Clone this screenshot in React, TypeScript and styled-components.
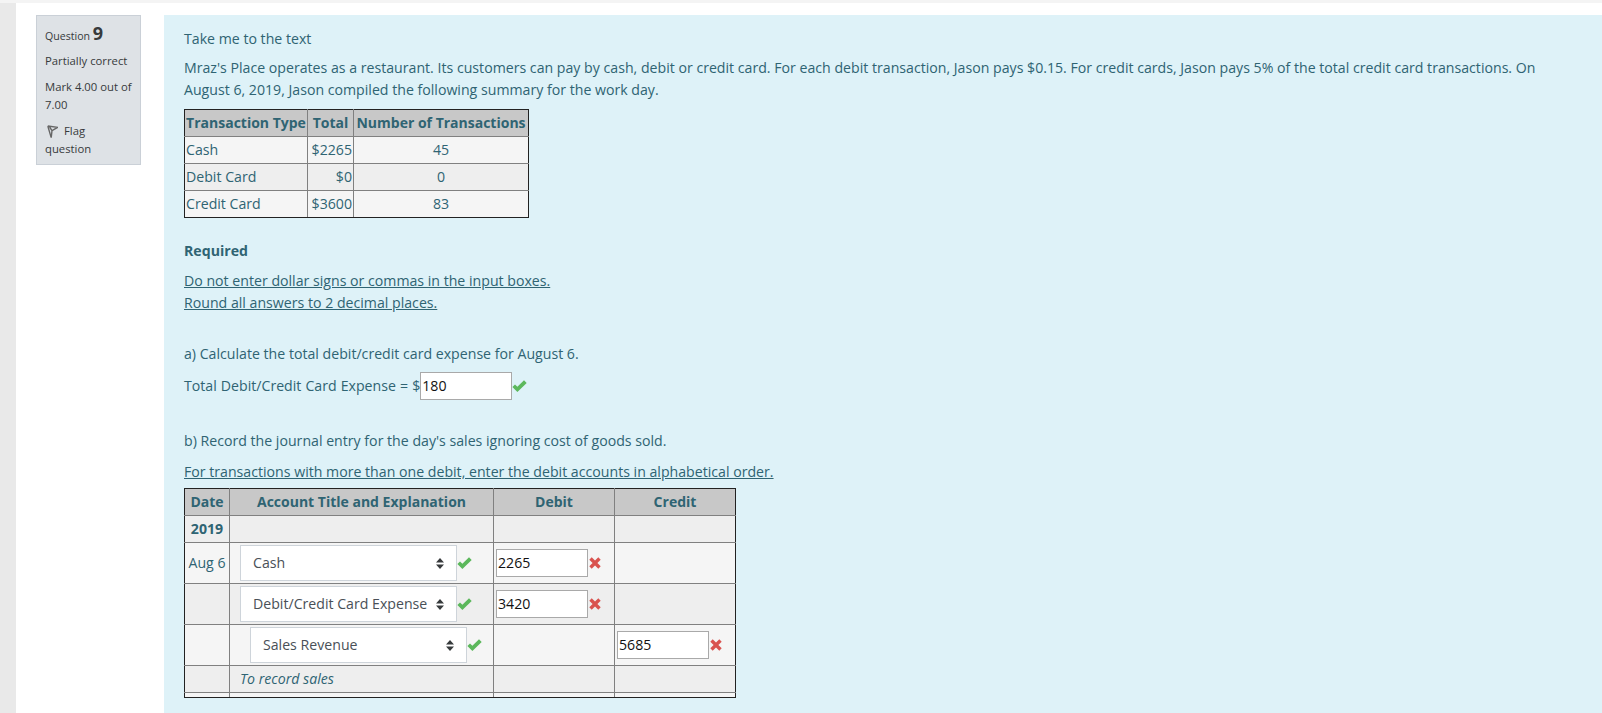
import { createGlobalStyle, styled } from "styled-components";

const GlobalStyle = createGlobalStyle`
  html, body {
    margin: 0;
    padding: 0;
    height: 713px;
    overflow: hidden;
    background: #fff;
    font-family: "Open Sans", "Liberation Sans", sans-serif;
    font-size: 14.15px;
    color: #2f6473;
  }
  * { box-sizing: border-box; }
`;

const Page = styled.div`
  display: flex;
  height: 713px;
  overflow: hidden;
  border-top: 3px solid #f4f4f4;
`;

const SideStrip = styled.div`
  width: 16px;
  flex: none;
  background: #e9e9e9;
`;

const Main = styled.div`
  flex: 1;
  display: flex;
  align-items: flex-start;
  gap: 23px;
  padding: 12px 0 0 20px;
`;

const InfoBox = styled.div`
  width: 105px;
  height: 150px;
  flex: none;
  padding: 5px 8px;
  background: #dee2e6;
  border: 1px solid #cad0d7;
  color: #373a3c;
  font-size: 11.3px;
  line-height: 18px;
`;

const QuestionNo = styled.h3`
  margin: 0 0 6px;
  font-size: 10.6px;
  font-weight: 400;
  line-height: 25px;
  height: 25px;

  b {
    font-size: 18px;
    font-weight: 700;
  }
`;

const InfoLine = styled.div`
  margin-bottom: 8px;
`;

const FlagLine = styled.div`
  margin-top: 8px;

  svg {
    margin: 0 6px 0 2px;
    vertical-align: -3px;
  }
`;

const Content = styled.div`
  flex: 1;
  height: 698px;
  padding: 13px 40px 0 20px;
  background: #def2f8;
  line-height: 22px;
`;

const Para = styled.p<{ $top?: number }>`
  margin: ${(p) => p.$top ?? 0}px 0 0;
`;

const Under = styled.span`
  text-decoration: underline;
`;

const Grid = styled.table<{ $width: number; $top: number; $flip?: boolean }>`
  border-collapse: collapse;
  table-layout: fixed;
  width: ${(p) => p.$width}px;
  margin-top: ${(p) => p.$top}px;
  line-height: 20px;

  th, td {
    border: 1px solid #808080;
    padding: 0 1px;
    vertical-align: middle;
  }
  th {
    height: 27px;
    font-size: 14px;
    font-weight: 700;
    background: #c8c8c8;
    text-align: center;
    white-space: nowrap;
    border-top-color: #222;
  }
  tr > :first-child { border-left-color: #222; }
  tr > :last-child { border-right-color: #222; }
  tbody tr:last-child td { border-bottom-color: #222; }
  tbody tr:nth-child(odd) td { background: ${(p) => (p.$flip ? "#eee" : "#f5f5f5")}; }
  tbody tr:nth-child(even) td { background: ${(p) => (p.$flip ? "#f5f5f5" : "#eee")}; }
`;

const SummaryCell = styled.td<{ $align?: string }>`
  height: 27px;
  text-align: ${(p) => p.$align ?? "left"};
`;

const EntryRow = styled.tr<{ $height: number }>`
  td { height: ${(p) => p.$height}px; }
`;

const EntryCell = styled.div<{ $indent?: number }>`
  display: flex;
  align-items: center;
  padding-left: ${(p) => 10 + (p.$indent ?? 0)}px;
`;

const SelectBox = styled.div`
  width: 217px;
  height: 36px;
  padding: 0 12px 0 12px;
  display: flex;
  align-items: center;
  justify-content: space-between;
  background: #fff;
  border: 1px solid #ced4da;
  color: #495057;
  white-space: nowrap;
`;

const AmountCell = styled.div`
  display: flex;
  align-items: center;
  padding-left: 2px;
`;

const Amount = styled.div`
  width: 92px;
  height: 28px;
  padding-left: 1px;
  background: #fff;
  border: 1px solid #a9a9a9;
  color: #111;
  line-height: 26px;
`;

const InlineRow = styled.div`
  display: flex;
  align-items: center;
  margin-top: 7px;
  height: 28px;
  word-spacing: 0.4px;
`;

const Italic = styled.em`
  padding-left: 9px;
`;

const Caret = () => (
  <svg width="8" height="11" viewBox="0 0 8 11" fill="#373a3c">
    <path d="M4 0 8 4.4H0zM4 11 0 6.6h8z" />
  </svg>
);

const Check = () => (
  <svg width="15" height="12" viewBox="0 0 15 12" style={{ flex: "none" }} fill="#5cb85c">
    <path d="M5.4 12 .4 7l2.6-2.6 2.4 2.4L12 .2l2.7 2.7z" />
  </svg>
);

const Cross = () => (
  <svg width="12" height="12" viewBox="0 0 12 12" style={{ marginLeft: 1, flex: "none" }} fill="#d9534f">
    <path d="M2.7.3 6 3.6 9.3.3l2.4 2.4L8.4 6l3.3 3.3-2.4 2.4L6 8.4l-3.3 3.3L.3 9.3 3.6 6 .3 2.7z" />
  </svg>
);

const Flag = () => (
  <svg width="11" height="13" viewBox="0 0 11 13" fill="none" stroke="#666" strokeWidth="1.4">
    <path d="M.8 1 10.5 2.4 5 5.6 4.2 12.6M.8 1l3.4 11.6M2.6 2l2.4 3.6" />
  </svg>
);

const rows = [
  ["Cash", "$2265", "45"],
  ["Debit Card", "$0", "0"],
  ["Credit Card", "$3600", "83"],
];

const entries = [
  { date: "Aug 6", account: "Cash", indent: 0, debit: "2265", credit: "" },
  { date: "", account: "Debit/Credit Card Expense", indent: 0, debit: "3420", credit: "" },
  { date: "", account: "Sales Revenue", indent: 10, debit: "", credit: "5685" },
];

export default function App() {
  return (
    <Page>
      <GlobalStyle />
      <SideStrip />
      <Main>
        <InfoBox>
          <QuestionNo>
            Question <b>9</b>
          </QuestionNo>
          <InfoLine>Partially correct</InfoLine>
          <InfoLine>Mark 4.00 out of 7.00</InfoLine>
          <FlagLine>
            <Flag />
            Flag question
          </FlagLine>
        </InfoBox>
        <Content>
          <Para>Take me to the text</Para>
          <Para $top={7}>
            Mraz's Place operates as a restaurant. Its customers can pay by cash, debit or credit card. For each debit
            transaction, Jason pays $0.15. For credit cards, Jason pays 5% of the total credit card transactions. On
            August 6, 2019, Jason compiled the following summary for the work day.
          </Para>
          <Grid $width={344} $top={8}>
            <colgroup>
              <col width="123" />
              <col width="46" />
              <col width="175" />
            </colgroup>
            <thead>
              <tr>
                <th>Transaction Type</th>
                <th>Total</th>
                <th>Number of Transactions</th>
              </tr>
            </thead>
            <tbody>
              {rows.map((r) => (
                <tr key={r[0]}>
                  <SummaryCell>{r[0]}</SummaryCell>
                  <SummaryCell $align="right">{r[1]}</SummaryCell>
                  <SummaryCell $align="center">{r[2]}</SummaryCell>
                </tr>
              ))}
            </tbody>
          </Grid>
          <Para $top={22}>
            <b>Required</b>
          </Para>
          <Para $top={8}>
            <Under>Do not enter dollar signs or commas in the input boxes.</Under>
            <br />
            <Under>Round all answers to 2 decimal places.</Under>
          </Para>
          <Para $top={29}>a) Calculate the total debit/credit card expense for August 6.</Para>
          <InlineRow>
            Total Debit/Credit Card Expense = $<Amount>180</Amount>
            <Check />
          </InlineRow>
          <Para $top={30}>b) Record the journal entry for the day's sales ignoring cost of goods sold.</Para>
          <Para $top={9}>
            <Under>For transactions with more than one debit, enter the debit accounts in alphabetical order.</Under>
          </Para>
          <Grid $width={551} $top={5} $flip>
            <colgroup>
              <col width="45" />
              <col width="264" />
              <col width="121" />
              <col width="121" />
            </colgroup>
            <thead>
              <tr>
                <th>Date</th>
                <th>Account Title and Explanation</th>
                <th>Debit</th>
                <th>Credit</th>
              </tr>
            </thead>
            <tbody>
              <EntryRow $height={27}>
                <td style={{ textAlign: "center" }}>
                  <b>2019</b>
                </td>
                <td />
                <td />
                <td />
              </EntryRow>
              {entries.map((e) => (
                <EntryRow $height={41} key={e.account}>
                  <td style={{ textAlign: "center" }}>{e.date}</td>
                  <td style={{ padding: 0 }}>
                    <EntryCell $indent={e.indent}>
                      <SelectBox>
                        {e.account}
                        <Caret />
                      </SelectBox>
                      <Check />
                    </EntryCell>
                  </td>
                  <td style={{ padding: 0 }}>
                    {e.debit && (
                      <AmountCell>
                        <Amount>{e.debit}</Amount>
                        <Cross />
                      </AmountCell>
                    )}
                  </td>
                  <td style={{ padding: 0 }}>
                    {e.credit && (
                      <AmountCell>
                        <Amount>{e.credit}</Amount>
                        <Cross />
                      </AmountCell>
                    )}
                  </td>
                </EntryRow>
              ))}
              <EntryRow $height={27}>
                <td />
                <td>
                  <Italic>To record sales</Italic>
                </td>
                <td />
                <td />
              </EntryRow>
              <EntryRow $height={5}>
                <td />
                <td />
                <td />
                <td />
              </EntryRow>
            </tbody>
          </Grid>
        </Content>
      </Main>
    </Page>
  );
}
